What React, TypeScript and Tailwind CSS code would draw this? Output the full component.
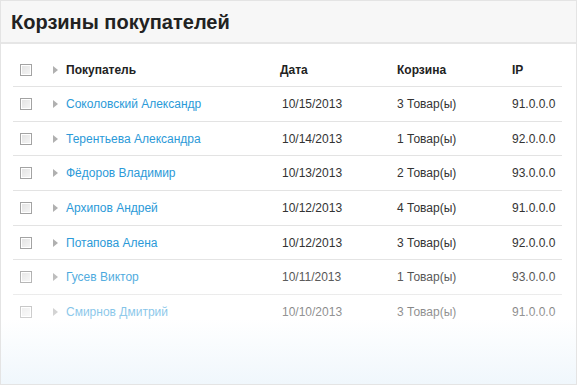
import React from 'react';

const rows = [
  { name: 'Соколовский Александр', date: '10/15/2013', cart: '3 Товар(ы)', ip: '91.0.0.0' },
  { name: 'Терентьева Александра', date: '10/14/2013', cart: '1 Товар(ы)', ip: '92.0.0.0' },
  { name: 'Фёдоров Владимир', date: '10/13/2013', cart: '2 Товар(ы)', ip: '93.0.0.0' },
  { name: 'Архипов Андрей', date: '10/12/2013', cart: '4 Товар(ы)', ip: '91.0.0.0' },
  { name: 'Потапова Алена', date: '10/12/2013', cart: '3 Товар(ы)', ip: '92.0.0.0' },
  { name: 'Гусев Виктор', date: '10/11/2013', cart: '1 Товар(ы)', ip: '93.0.0.0' },
  { name: 'Смирнов Дмитрий', date: '10/10/2013', cart: '3 Товар(ы)', ip: '91.0.0.0' },
];

function Checkbox() {
  return (
    <span className="block w-[12px] h-[12px] border border-[#a3a3a3] bg-gradient-to-br from-[#e2e2e2] to-[#f6f6f6] shadow-[inset_0_0_0_1px_#fff]" />
  );
}

function Arrow() {
  return (
    <svg width="5" height="8" viewBox="0 0 5 8" className="block">
      <path d="M0 0 L5 4 L0 8 Z" fill="#b0b0b0" />
    </svg>
  );
}

export default function App() {
  return (
    <div className="w-[578px] h-[385px] bg-white font-['Liberation_Sans',Arial,sans-serif] text-[12px] text-[#333] overflow-hidden">
      <div className="relative h-full border border-[#e4e4e4] mr-[1px] bg-white">
        <div className="h-[43px] bg-[#f7f7f7] border-b-2 border-[#e6e6e6] flex items-center pl-[10px]">
          <h1 className="text-[20px] font-bold text-[#222] leading-none">Корзины покупателей</h1>
        </div>
        <div className="ml-[12px] mr-[14px] mt-[9px]">
          <div className="flex items-center h-[34px] border-b border-[#e3e3e3] font-bold text-[#222]">
            <div className="w-[40px] pl-[7px]"><Checkbox /></div>
            <div className="w-[13px]"><Arrow /></div>
            <div className="w-[214px]">Покупатель</div>
            <div className="w-[117px]">Дата</div>
            <div className="w-[115px]">Корзина</div>
            <div>IP</div>
          </div>
          {rows.map((r, i) => (
            <div
              key={i}
              className={`flex items-center h-[34.7px] ${i < rows.length - 1 ? 'border-b border-[#e3e3e3]' : ''}`}
            >
              <div className="w-[40px] pl-[7px]"><Checkbox /></div>
              <div className="w-[13px]"><Arrow /></div>
              <div className="w-[216px] text-[#2b9ad8]">{r.name}</div>
              <div className="w-[115px]">{r.date}</div>
              <div className="w-[115px]">{r.cart}</div>
              <div>{r.ip}</div>
            </div>
          ))}
        </div>
        {/* fade-out over the last rows */}
        <div className="absolute left-0 right-0 bottom-0 h-[130px] bg-gradient-to-b from-[#ffffff00] via-[#ffffff80] to-[#f0f7fc] pointer-events-none" />
      </div>
    </div>
  );
}
